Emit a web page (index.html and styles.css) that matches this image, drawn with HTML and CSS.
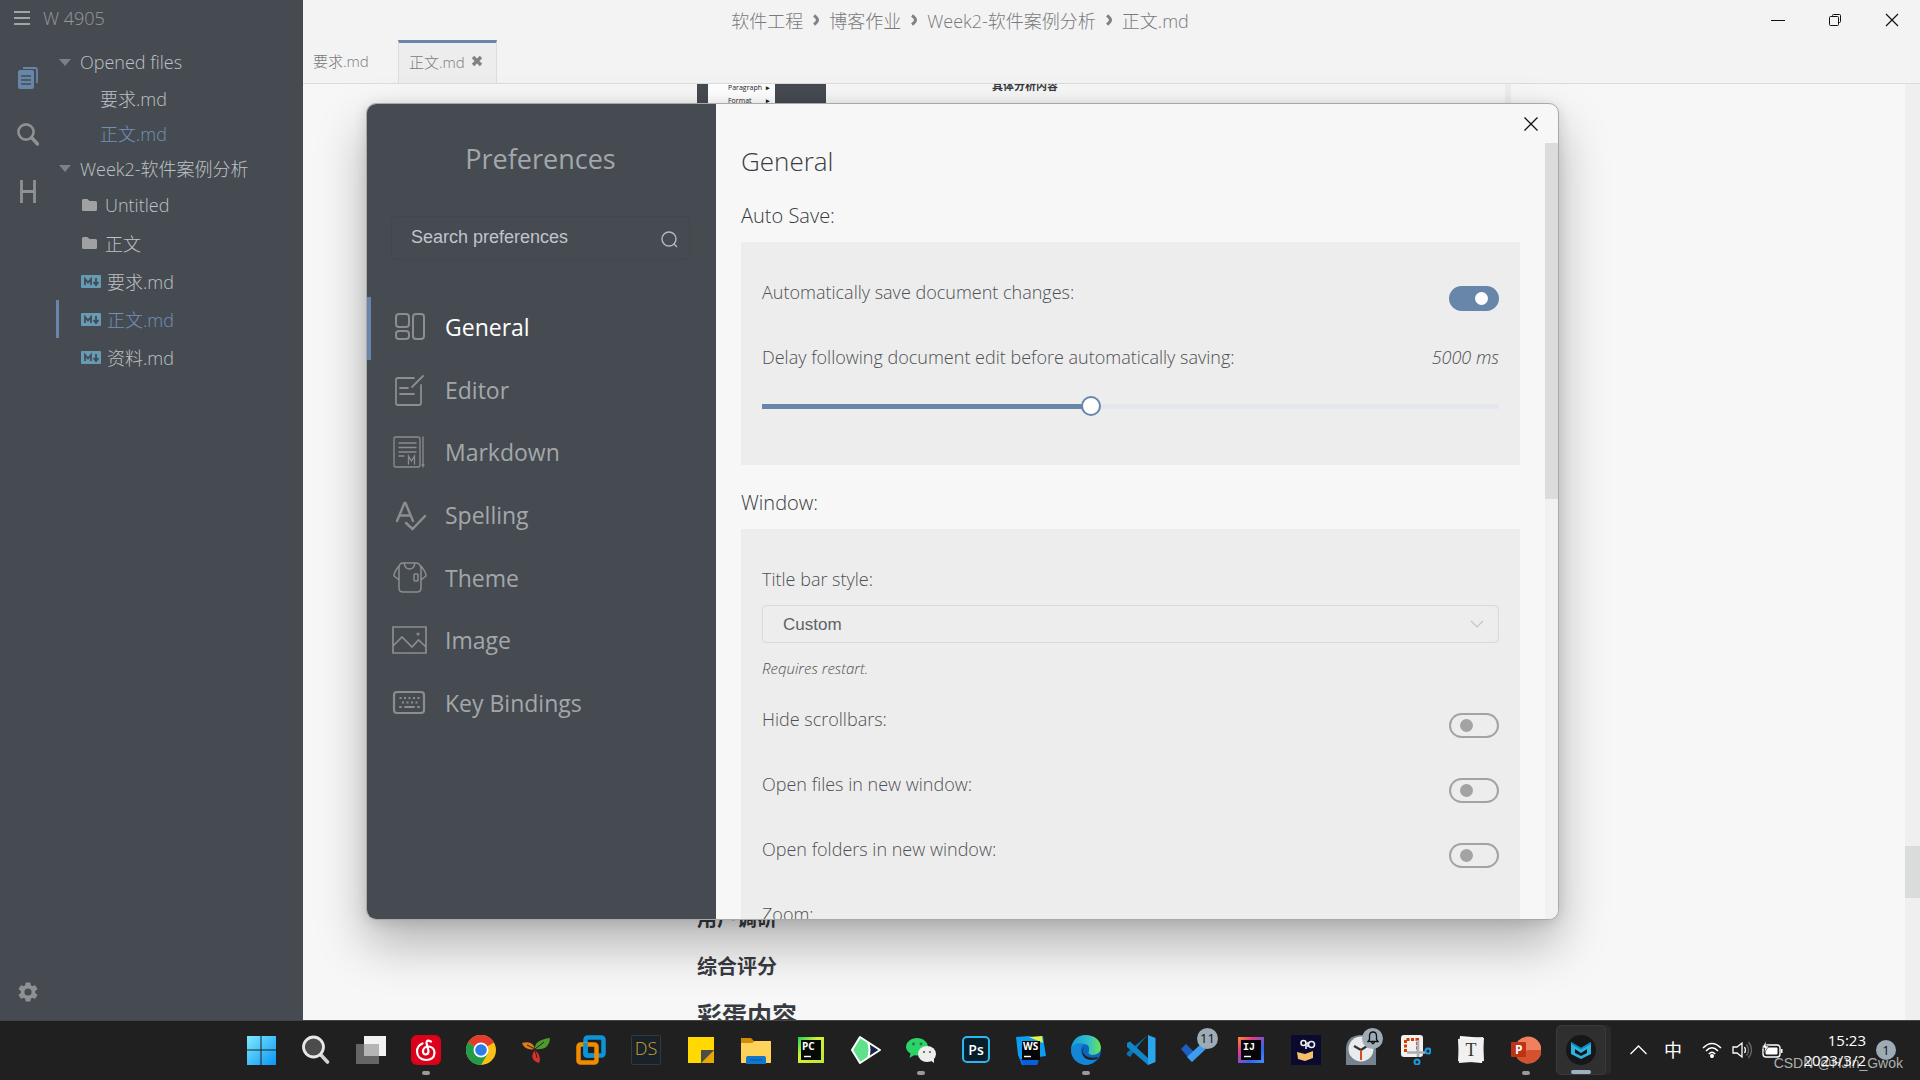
FILE: index.html
```html
<!DOCTYPE html>
<html lang="zh-CN">
<head>
<meta charset="utf-8">
<title>正文.md</title>
<link rel="stylesheet" href="styles.css">
</head>
<body>
<div class="app">
  <aside class="sidebar">
    <header class="side-head">
      <button class="plain" aria-label="Menu"><svg width="16" height="16" viewBox="0 0 16 16" stroke="#c0c3c6" stroke-width="1.6"><path d="M0 2h16M0 8h16M0 14h16"/></svg></button>
      <span class="count">W 4905</span>
    </header>
    <div class="side-body">
      <nav class="rail">
        <button class="plain" aria-label="Files"><svg width="20" height="22" viewBox="0 0 20 22"><path d="M5 1h12q2 0 2 2v13" fill="none" stroke="#6886aa" stroke-width="1.8"/><rect y="3" width="16" height="19" rx="2" fill="#6886aa"/><path d="M3 9h10M3 13h10M3 17h10" stroke="#464b51" stroke-width="1.4"/></svg></button>
        <button class="plain" aria-label="Search"><svg width="22" height="23" viewBox="0 0 22 23" fill="none" stroke="#8f9193"><circle cx="9" cy="9" r="7.6" stroke-width="2.6"/><path d="M14.500 14.500L20.500 21" stroke-width="3.400" stroke-linecap="round"/></svg></button>
        <button class="plain" aria-label="Outline"><svg width="16" height="23" viewBox="0 0 16 23" fill="none" stroke="#8f9193" stroke-width="2.8"><path d="M1.500 0v23M14.500 0v23M1.500 11.500h13"/></svg></button>
        <button class="plain gear" aria-label="Settings"><svg width="24" height="24" viewBox="0 0 24 24" fill="#8f9193"><path d="M19.140 12.940a7 7 0 0 0 0-1.880l2.030-1.580a.5.5 0 0 0 .12-.61l-1.920-3.320a.5.5 0 0 0-.59-.22l-2.390.96a7 7 0 0 0-1.620-.94l-.36-2.540A.5.5 0 0 0 13.920 2.400h-3.840a.5.5 0 0 0-.47.410l-.36 2.540a7 7 0 0 0-1.620.94l-2.390-.96a.5.5 0 0 0-.59.220L2.740 8.870a.5.5 0 0 0 .12.610l2.030 1.580a7 7 0 0 0 0 1.880l-2.030 1.580a.5.5 0 0 0-.12.610l1.920 3.320c.12.220.37.290.59.220l2.390-.96c.5.380 1.030.7 1.620.94l.36 2.540c.05.240.24.410.47.410h3.840c.24 0 .44-.17.470-.41l.36-2.540a7 7 0 0 0 1.620-.94l2.390.96c.22.080.47 0 .59-.22l1.920-3.320a.5.5 0 0 0-.12-.61zM12 15.600a3.600 3.600 0 1 1 0-7.200 3.600 3.600 0 0 1 0 7.200z" fill-rule="evenodd"/></svg></button>
      </nav>
      <div class="tree">
        <div class="row group"><i class="caret"></i>Opened files</div>
        <a class="row opened" href="#">要求.md</a>
        <a class="row opened current" href="#">正文.md</a>
        <div class="row group"><i class="caret"></i>Week2-软件案例分析</div>
        <a class="row item" href="#"><svg class="folder" viewBox="0 0 15 12"><path d="M1.500 0h4l2 2h6q1.500 0 1.500 1.500v7q0 1.500-1.500 1.500h-12Q0 12 0 10.500v-9Q0 0 1.500 0z" fill="#9fa1a3"/></svg>Untitled</a>
        <a class="row item" href="#"><svg class="folder" viewBox="0 0 15 12"><path d="M1.500 0h4l2 2h6q1.500 0 1.500 1.500v7q0 1.500-1.500 1.500h-12Q0 12 0 10.500v-9Q0 0 1.500 0z" fill="#9fa1a3"/></svg>正文</a>
        <a class="row item" href="#"><svg class="md" viewBox="0 0 20 13"><rect width="20" height="13" rx="1" fill="#659bb5"/><path d="M4 10V4l3 3.500L10 4v6M15 3v6M12.500 7l2.500 3 2.500-3" fill="none" stroke="#464b51" stroke-width="1.800"/></svg>要求.md</a>
        <a class="row item current active" href="#"><svg class="md" viewBox="0 0 20 13"><rect width="20" height="13" rx="1" fill="#659bb5"/><path d="M4 10V4l3 3.500L10 4v6M15 3v6M12.500 7l2.500 3 2.500-3" fill="none" stroke="#464b51" stroke-width="1.800"/></svg>正文.md</a>
        <a class="row item" href="#"><svg class="md" viewBox="0 0 20 13"><rect width="20" height="13" rx="1" fill="#659bb5"/><path d="M4 10V4l3 3.500L10 4v6M15 3v6M12.500 7l2.500 3 2.500-3" fill="none" stroke="#464b51" stroke-width="1.800"/></svg>资料.md</a>
      </div>
    </div>
  </aside>

  <main class="editor">
    <header class="titlebar">
      <div class="crumbs"><span>软件工程</span><svg viewBox="0 0 6 12"><path d="M1 1.500q3.500 2.500 3.500 4.500T1 10.500"/></svg><span>博客作业</span><svg viewBox="0 0 6 12"><path d="M1 1.500q3.500 2.500 3.500 4.500T1 10.500"/></svg><span>Week2-软件案例分析</span><svg viewBox="0 0 6 12"><path d="M1 1.500q3.500 2.500 3.500 4.500T1 10.500"/></svg><span>正文.md</span></div>
      <div class="controls">
        <button class="plain" aria-label="Minimize"><svg width="14" height="14" viewBox="0 0 14 14"><path d="M0 7.500h14" stroke="#111"/></svg></button>
        <button class="plain" aria-label="Restore"><svg width="14" height="14" viewBox="0 0 14 14" fill="none" stroke="#111"><rect x="1.500" y="3.500" width="9" height="9" rx="1"/><path d="M4.500 3V2.500q0-1 1-1h6q1 0 1 1v6q0 1-1 1H11"/></svg></button>
        <button class="plain" aria-label="Close"><svg width="14" height="14" viewBox="0 0 14 14"><path d="M1 1l12 12M13 1L1 13" stroke="#111" stroke-width="1.200"/></svg></button>
      </div>
    </header>
    <div class="tabs">
      <a class="tab" href="#">要求.md</a>
      <div class="tab on">正文.md<button class="plain" aria-label="Close tab"><svg width="12" height="12" viewBox="0 0 12 12"><path d="M2 2l8 8M10 2l-8 8" stroke="#808284" stroke-width="3.400"/></svg></button></div>
    </div>
    <div class="scroller">
      <article class="doc">
        <div class="shot">
          <div class="shot-dark edge"></div>
          <div class="shot-menu"><span>Paragraph<b>▸</b></span><span>Format<b>▸</b></span></div>
          <div class="shot-dark"></div>
          <strong class="shot-title">具体分析内容</strong>
        </div>
        <div class="ending">
          <h3>用户调研</h3>
          <h3>综合评分</h3>
          <h2>彩蛋内容</h2>
        </div>
      </article>
      <div class="track"><div class="thumb"></div></div>
    </div>
  </main>
</div>

<section class="prefs" role="dialog" aria-label="Preferences">
  <aside class="prefs-side">
    <h1>Preferences</h1>
    <div class="search">
      <input type="text" placeholder="Search preferences" aria-label="Search preferences">
      <svg width="17" height="17" viewBox="0 0 17 17" fill="none" stroke="#b4b9bf" stroke-width="1.400"><circle cx="8" cy="8" r="7"/><path d="M12.800 12.800l3.200 3.200"/></svg>
    </div>
    <nav class="menu">
      <a class="on" href="#"><svg viewBox="0 0 36 36"><g stroke-width="2"><rect x="5" y="5" width="13" height="13" rx="3"/><rect x="5" y="22" width="13" height="8" rx="3"/><rect x="22" y="5" width="11" height="25" rx="3"/></g></svg>General</a>
      <a href="#"><svg viewBox="0 0 36 36"><path stroke-width="1.800" d="M23 6H7q-2 0-2 2v23q0 2 2 2h21q2 0 2-2V13M21 15L32 4M9 16h8M9 22h14"/></svg>Editor</a>
      <a href="#"><svg viewBox="0 0 36 36"><g stroke-width="1.300"><rect x="3" y="3" width="26" height="30" rx="2"/><path d="M32 3v30M8 9h17M8 13.500h17M8 18h17M8 22h5M17.500 30v-8l3 5 3-5v8M31 31h2"/></g></svg>Markdown</a>
      <a href="#"><svg viewBox="0 0 36 36"><path stroke-width="2.400" d="M6 24l7.500-18h1L22 24M9 18.500h10M15 26l6.500 6L34 19"/></svg>Spelling</a>
      <a href="#"><svg viewBox="0 0 36 36"><g stroke-width="1.500"><path d="M11 3h14q4 0 5 5v20q0 4-4 4H12q-4 0-4-4V8q0-4 3-5zM13 3q1 6 5.500 6T24 3M8 6q-5 6-5 10l5 4M30 6q5 6 5 10l-5 4"/><rect x="23" y="14" width="4" height="7" rx="1"/></g></svg>Theme</a>
      <a href="#"><svg viewBox="0 0 36 36"><path stroke-width="1.700" d="M2 5h33v26H2zM2 24l9-9 10 10 6.500-7 7.500 7"/><circle cx="27" cy="12" r="1" stroke-width="1.200"/></svg>Image</a>
      <a href="#"><svg viewBox="0 0 36 36"><rect x="3" y="7" width="30" height="21" rx="3" stroke-width="2.200"/><path stroke-width="2" stroke-linecap="butt" stroke-dasharray="2 2.500" d="M8.500 13h20M11 17.500h16"/><path stroke-width="2" d="M9 22h1M14 22h9M27 22h1"/></svg>Key Bindings</a>
    </nav>
  </aside>
  <div class="prefs-main">
    <button class="plain close" aria-label="Close preferences"><svg width="14" height="14" viewBox="0 0 14 14"><path d="M.5.5l13 13M13.500.5l-13 13" stroke="#111" stroke-width="1.300"/></svg></button>
    <div class="prefs-scroll">
      <form class="form">
        <h2>General</h2>
        <h3>Auto Save:</h3>
        <div class="card first">
          <div class="line"><label for="autosave">Automatically save document changes:</label><input class="switch" id="autosave" type="checkbox" checked></div>
          <div class="line delay"><label for="delay">Delay following document edit before automatically saving:</label><output for="delay">5000 ms</output></div>
          <input class="slider" id="delay" type="range" min="1000" max="10000" value="5000">
        </div>
        <h3>Window:</h3>
        <div class="card second">
          <label class="cap" for="titlestyle">Title bar style:</label>
          <div class="select"><select id="titlestyle"><option>Custom</option><option>Native</option></select><svg width="14" height="8" viewBox="0 0 14 8"><path d="M1 1l6 6 6-6" fill="none" stroke="#c0c4cc" stroke-width="1.200"/></svg></div>
          <p class="note">Requires restart.</p>
          <div class="line"><label for="hide">Hide scrollbars:</label><input class="switch" id="hide" type="checkbox"></div>
          <div class="line"><label for="files">Open files in new window:</label><input class="switch" id="files" type="checkbox"></div>
          <div class="line"><label for="folders">Open folders in new window:</label><input class="switch" id="folders" type="checkbox"></div>
          <div class="cap">Zoom:</div>
        </div>
      </form>
      <div class="prefs-track"><div class="prefs-thumb"></div></div>
    </div>
  </div>
</section>

<footer class="taskbar">
  <div class="apps">
    <button class="plain task" aria-label="Start"><svg viewBox="0 0 30 30"><defs><linearGradient id="win" x2="1" y2="1"><stop stop-color="#7deaff"/><stop offset="1" stop-color="#0a94f5"/></linearGradient></defs><path fill="url(#win)" d="M1 1h13.500v13.500H1zM15.500 1H30v13.500H15.500zM1 15.500h13.500V30H1zM15.500 15.500H30V30H15.500z"/></svg></button>
    <button class="plain task" aria-label="Search"><svg viewBox="0 0 30 30"><path d="M20 20l6.500 7" stroke="#cdd3d8" stroke-width="3.600" stroke-linecap="round"/><circle cx="12.500" cy="12" r="10" fill="#4c4c4c" stroke="#e6e8ea" stroke-width="2.800"/></svg></button>
    <button class="plain task" aria-label="Task view"><svg viewBox="0 0 30 30"><rect x="8" y="1" width="22" height="20" fill="#f2f2f2"/><rect x="0" y="9" width="23" height="20" fill="#777" opacity=".8"/><path d="M8 9h15v12H8z" fill="#b5b5b5"/></svg></button>
    <button class="plain task run" aria-label="Music"><svg viewBox="0 0 30 30"><rect width="30" height="30" rx="6" fill="#dd001b"/><path d="M20 6.500Q15.500 4 15.500 8l2 8q0 3.500-3 3.500-3-.5-2.500-4 1-4 5.500-4 6 .5 6 6.500-.5 7-8.500 7-8.500-.5-9-8.500Q6 11 11.500 8.500" fill="none" stroke="#fff" stroke-width="2.200" stroke-linecap="round"/></svg></button>
    <button class="plain task" aria-label="Chrome"><svg viewBox="0 0 30 30"><circle cx="15" cy="15" r="15" fill="#fbc116"/><path d="M15 15L2 7.500A15 15 0 0 1 28 7.500z" fill="#e33b2e"/><path d="M15 15L2 7.500A15 15 0 0 0 15 30l6.500-11z" fill="#229a48"/><circle cx="15" cy="15" r="7.500" fill="#fff"/><circle cx="15" cy="15" r="5.800" fill="#2a7de9"/></svg></button>
    <button class="plain task" aria-label="Trilium"><svg viewBox="0 0 30 30"><path d="M14 14Q13 5 29 3q-1 13-15 11z" fill="#4c9b2c"/><path d="M14 14Q4 16 1 8q11-3 13 6z" fill="#e27c16"/><path d="M14 15q-7 9 4 13 3-7-4-13z" fill="#d9332c"/><path d="M14 14l9-7M14 14L6 10M14 15l2 8" stroke="#222"/></svg></button>
    <button class="plain task" aria-label="Virtual machine"><svg viewBox="0 0 30 30" fill="none" stroke-width="4.500"><rect x="9.500" y="2.500" width="18" height="18" rx="2" stroke="#0c94d8"/><rect x="2.500" y="9.500" width="18" height="18" rx="2" stroke="#f18b00"/><path d="M9.500 8v10.500q0 2 2 2H18" stroke="#0c94d8"/></svg></button>
    <button class="plain task" aria-label="DS"><svg viewBox="0 0 30 30"><rect x=".5" y=".5" width="29" height="29" rx="1" fill="#1a2229" stroke="#323940"/><text x="15" y="20" class="t-ds">DS</text></svg></button>
    <button class="plain task" aria-label="Notes"><svg viewBox="0 0 30 30"><path d="M2 2h26v13L15 28H2z" fill="#ffd900"/><path d="M28 15v13H15z" fill="#e9a800"/><path d="M15 15h13L15 28z" fill="#4c4c4c"/></svg></button>
    <button class="plain task" aria-label="Explorer"><svg viewBox="0 0 30 30"><path d="M0 3h10l3 3h17v10H0z" fill="#d18b0b"/><path d="M0 8h11l3-2h16v22H0z" fill="#ffd35a"/><path d="M5 29v-6q0-2 2-2h16q2 0 2 2v6z" fill="#1177cc"/><path d="M9 25h12" stroke="#0a559c"/></svg></button>
    <button class="plain task" aria-label="PyCharm"><svg viewBox="0 0 30 30"><defs><linearGradient id="pc" x2="1" y2="1"><stop stop-color="#17d45b"/><stop offset=".4" stop-color="#d8f030"/><stop offset="1" stop-color="#bfe63a"/></linearGradient></defs><path d="M2 2h26v26H2z" fill="url(#pc)"/><path d="M5 5h20v20H5z" fill="#050a05"/><text x="6" y="15" class="t-ide">PC</text><path d="M8 21.500h7" stroke="#fff" stroke-width="1.400"/></svg></button>
    <button class="plain task" aria-label="Player"><svg viewBox="0 0 30 30"><path d="M9 2L1 15l8 13 20-13z" fill="#5fe08a"/><path d="M17 7l12 8-12 8q3-8 0-16z" fill="#17234f"/><path d="M17 7q3 8 0 16M9 2L1 15l8 13 20-13z" fill="none" stroke="#fff" stroke-width="2" stroke-linejoin="round"/></svg></button>
    <button class="plain task run" aria-label="WeChat"><svg viewBox="0 0 30 30"><path d="M11 3c6 0 11 4 11 9s-5 8.500-11 8.500l-3-.3-4.500 2.800 1-4.500C2 17 0 15 0 12c0-5 5-9 11-9z" fill="#2bd466"/><ellipse cx="21" cy="19" rx="9" ry="8" fill="#ededed"/><path d="M24 25l4 3v-5z" fill="#ededed"/><g fill="#3a6b4a"><circle cx="7.500" cy="9" r="1.400"/><circle cx="15" cy="9" r="1.400"/><circle cx="18" cy="17" r="1.100"/><circle cx="24" cy="17" r="1.100"/></g></svg></button>
    <button class="plain task" aria-label="Photoshop"><svg viewBox="0 0 30 30"><rect x="2" y="2" width="26" height="25" rx="4" fill="#071e2b" stroke="#2db5f2" stroke-width="2"/><text x="15" y="20" class="t-ps">Ps</text></svg></button>
    <button class="plain task" aria-label="WebStorm"><svg viewBox="0 0 30 30"><path d="M0 2l13-1 5 2 9-2 1 8 2 12-7 1-2 8H6L2 20z" fill="#0d9df1"/><path d="M13 2l13-1 1 7z" fill="#e9f04a"/><path d="M4 24l3 6h14l2-6z" fill="#075fe0"/><path d="M6 6h18v19H6z" fill="#050505"/><text x="7" y="15" class="t-ide">WS</text><path d="M8 21.500h7" stroke="#fff" stroke-width="1.400"/></svg></button>
    <button class="plain task run" aria-label="Edge"><svg viewBox="0 0 30 30"><defs><linearGradient id="ed"><stop stop-color="#1599dd"/><stop offset=".6" stop-color="#34c1c4"/><stop offset="1" stop-color="#6be64f"/></linearGradient></defs><circle cx="15" cy="15" r="15" fill="#0b66bd"/><path d="M0 14Q2 0 15 0q14 1 15 13-1 7-9 7-5-1-3-4 1-7-5-7Q3 8 0 14z" fill="url(#ed)"/><path d="M0 14q5-8 13-5-5 4-2 11 4 7 15 4-5 6-12 6Q0 27 0 14z" fill="#1586d6"/><path d="M13 12q-3 5 2 9 5 3 12 1l-1 2q-11 3-14-4-2-5 1-8z" fill="#222"/></svg></button>
    <button class="plain task" aria-label="VS Code"><svg viewBox="0 0 30 30"><path d="M22 0l-7 7.500L4 22l-3.500-2.500 1-2.500L22 0z" fill="#0a73b6"/><path d="M1 8l3-1.500L24 25l-2 5L1 12z" fill="#1187c9"/><path d="M22 0l7.500 3v24L22 30z" fill="#2aa6ee"/></svg></button>
    <button class="plain task" aria-label="To Do"><svg viewBox="0 0 30 30"><path d="M0 14l5-5 10 10-4 8z" fill="#1c5fc0"/><path d="M11 27l-5-5L22 7l6 4z" fill="#3e9cf0"/></svg><span class="badge">11</span></button>
    <button class="plain task" aria-label="IntelliJ"><svg viewBox="0 0 30 30"><defs><linearGradient id="ij" x2="1" y2="1"><stop stop-color="#ff8d24"/><stop offset=".3" stop-color="#e13a8e"/><stop offset=".7" stop-color="#2c67ef"/><stop offset="1" stop-color="#4b8cf8"/></linearGradient></defs><path d="M2 2h26v26H2z" fill="url(#ij)"/><path d="M5 5h20v20H5z" fill="#08050a"/><text x="7" y="15" class="t-ide mono">IJ</text><path d="M8 21.500h7" stroke="#fff" stroke-width="1.400"/></svg></button>
    <button class="plain task" aria-label="Reader"><svg viewBox="0 0 30 30"><path d="M0 0h30v30H0z" fill="#0a0930"/><path d="M6 17l8 2 8-3v7l-8 3-7-2z" fill="#f5c069"/><g fill="none" stroke="#eee" stroke-width="1.600"><circle cx="12.500" cy="8" r="2.500"/><circle cx="20.500" cy="9.500" r="3"/><path d="M15 8v6M17 7v5"/></g></svg></button>
    <button class="plain task" aria-label="Clock"><svg viewBox="0 0 30 30"><path d="M0 30V13Q1 1 14 0h16v30z" fill="#76838e"/><circle cx="15" cy="14" r="12.500" fill="#e9ebed"/><path d="M15 15l-7-4M15 15l6-4" stroke="#333" stroke-width="2.200"/><path d="M15 15v10" stroke="#d84b1c" stroke-width="2"/></svg><span class="badge"><svg class="bell" viewBox="0 0 12 14"><path d="M1 10.500h10l-1.500-2V5q0-4-3.500-4T2.500 5v3.500zM4.500 11q1.500 3.500 3 0" fill="none" stroke="#111" stroke-width="1.300"/></svg></span></button>
    <button class="plain task" aria-label="Snipping"><svg viewBox="0 0 30 30"><rect width="22" height="22" rx="3" fill="#f1f1f1"/><path d="M4.500 17V4.500h12V17" fill="none" stroke="#d83b01" stroke-width="3" stroke-dasharray="3 1.500"/><path d="M17 5v17M6 17.500h18" stroke="#a9b0b6" stroke-width="2.600"/><g fill="none" stroke="#1d9be0" stroke-width="2"><circle cx="27" cy="16" r="2.500"/><circle cx="16" cy="27" r="2.500"/></g></svg></button>
    <button class="plain task" aria-label="Typora"><svg viewBox="0 0 30 30"><path d="M4 1l24 2-2 25-24-2z" fill="#fafafa"/><path d="M2 4l25-2 1 24-25 2z" fill="#f1f1f1"/><text x="15" y="21" class="t-typora">T</text></svg></button>
    <button class="plain task run" aria-label="PowerPoint"><svg viewBox="0 0 30 30"><circle cx="17" cy="15" r="13.500" fill="#f08060"/><path d="M17 15h13.500A13.500 13.500 0 0 1 5 21z" fill="#d35230"/><rect x="0" y="7" width="15" height="15" rx="1" fill="#bd3314"/><text x="4" y="19" class="t-ppt">P</text></svg></button>
    <button class="plain task front" aria-label="MarkText"><svg viewBox="0 0 30 30"><circle cx="15" cy="15" r="15" fill="#161718"/><path d="M5 7l10 6 10-6v12l-10 5-10-5z" fill="#2cb4e0"/><path d="M9 14l6 4 6-4v4l-6 3-6-3z" fill="#161718"/><path d="M5 8l10 6 10-6" fill="none" stroke="#1587b4" stroke-width="1.500"/></svg></button>
  </div>
  <div class="tray">
    <svg width="17" height="10" viewBox="0 0 17 10"><path d="M.5 9l8-8 8 8" fill="none" stroke="#fff" stroke-width="1.300"/></svg>
    <span class="ime">中</span>
    <svg width="20" height="16" viewBox="0 0 20 16" fill="none" stroke="#fff" stroke-width="1.500"><path d="M1 6q9-9 18 0M4 9q6-6.500 12 0M6.800 12q3.200-3.500 6.400 0"/><circle cx="10" cy="14" r="1.300" fill="#fff"/></svg>
    <svg width="20" height="18" viewBox="0 0 20 18" fill="none" stroke="#fff" stroke-width="1.300"><path d="M1 6h4l5-4v14l-5-4H1zM12.500 6q2 3 0 6"/><path d="M14.500 3.500q4 5.500 0 11M16.500 1q6 8 0 16" stroke="#666"/></svg>
    <svg width="21" height="17" viewBox="0 0 21 17"><rect x="1" y="4" width="17" height="12" rx="3" fill="none" stroke="#fff" stroke-width="1.400"/><rect x="3.500" y="6.500" width="12" height="7" rx="1" fill="#fff"/><path d="M19 8h1.500v4H19z" fill="#fff"/><path d="M4 0L0 7h3l-1 5 5-7H4z" fill="#fff" stroke="#202020" stroke-width=".6"/></svg>
    <div class="clock"><time>15:23</time><time>2023/3/2</time></div>
    <span class="notif">1</span>
  </div>
  <span class="watermark">CSDN @HJin_Gwok</span>
</footer>
</body>
</html>
```
FILE: styles.css
```css
* { box-sizing: border-box; }

body {
  margin: 0;
  height: 100vh;
  display: flex;
  flex-direction: column;
  overflow: hidden;
  position: relative;
  font-family: "Open Sans", "Noto Sans CJK SC", sans-serif;
  font-weight: 300;
  font-size: 18px;
  color: #383b3f;
}

h1, h2, h3, p { margin: 0; }
a { color: inherit; text-decoration: none; }
svg { display: block; flex: none; }

.plain {
  border: 0;
  padding: 0;
  background: none;
  font: inherit;
  display: flex;
  align-items: center;
  justify-content: center;
}

.app { flex: 1; min-height: 0; display: flex; }

/* file sidebar */
.sidebar {
  width: 303px;
  flex: none;
  background: #464b51;
  color: #bdc1c5;
  display: flex;
  flex-direction: column;
}
.side-head { display: flex; align-items: center; gap: 13px; height: 36px; padding-left: 14px; }
.count { color: #96999c; }
.side-body { flex: 1; display: flex; }
.rail {
  width: 56px;
  display: flex;
  flex-direction: column;
  align-items: center;
  padding: 31px 0 16px;
  gap: 34px;
}
.gear { margin-top: auto; }
.tree { flex: 1; padding-top: 8px; }
.row { display: flex; align-items: center; height: 36px; }
.row.group { gap: 9px; padding-left: 3px; }
.caret { border: 6px solid transparent; border-top: 7px solid #7c8187; border-bottom: 0; }
.row.opened { height: 35px; padding-left: 44px; }
.row.item { height: 38px; padding-left: 22px; border-left: 3px solid transparent; }
.row.active { border-left-color: #6886aa; }
.current { color: #6f91ba; }
.folder { width: 15px; height: 12px; margin: 0 8px 0 1px; }
.md { width: 20px; height: 13px; margin-right: 6px; }

/* editor */
.editor { flex: 1; min-width: 0; display: flex; flex-direction: column; background: #f7f7f7; }
.titlebar { height: 40px; display: flex; align-items: center; background: #f3f3f3; }
.crumbs { flex: 1; display: flex; align-items: center; justify-content: center; gap: 10px; color: #777a7d; padding-right: 132px; }
.crumbs svg { width: 6px; height: 12px; fill: none; stroke: #808284; stroke-width: 3; }
.controls { display: flex; }
.controls .plain { width: 57px; height: 40px; }
.tabs { display: flex; height: 44px; background: #f3f3f3; border-bottom: 1px solid #dcdcdc; }
.tab { width: 95px; padding: 0 0 2px 10px; display: flex; align-items: center; gap: 6px; font-size: 15px; color: #777a7d; }
.tab.on { width: 99px; padding-bottom: 4px; background: #ededed; border: 1px solid #dcdcdc; border-top: 3px solid #6886aa; border-bottom: 0; }
.scroller { flex: 1; min-height: 0; display: flex; overflow: hidden; }
.doc { flex: 1; display: flex; flex-direction: column; justify-content: space-between; align-items: center; }
.shot, .ending { width: 814px; }
.shot { height: 60px; display: flex; border-right: 6px solid #eeeeee; }
.shot-dark { width: 51px; flex: none; background: #464b51; }
.shot-dark.edge { width: 11px; }
.shot-menu { width: 67px; flex: none; background: #fff; font-size: 7px; line-height: 13px; color: #222; padding: 0 5px 0 20px; margin-top: -3px; font-weight: 400; }
.shot-menu span { display: flex; justify-content: space-between; }
.shot-title { font-size: 11px; line-height: 13px; font-weight: 700; margin: -5px 0 0 166px; }
.ending { height: 125px; flex: none; }
.ending h3 { font-size: 20px; line-height: 48px; font-weight: 700; }
.ending h2 { font-size: 25px; line-height: 48px; font-weight: 700; }
.track { width: 15px; background: #efefef; display: flex; align-items: flex-end; }
.thumb { width: 15px; height: 52px; margin-bottom: 122px; background: #dadcdc; }

/* preferences window, floating over the editor */
.prefs {
  position: absolute;
  left: 366px;
  right: 361px;
  top: 103px;
  bottom: 160px;
  display: flex;
  overflow: hidden;
  border: 1px solid #a9a9a9;
  border-radius: 10px;
  background: #f7f7f7;
  box-shadow: 0 24px 50px rgba(0, 0, 0, .28), 0 2px 14px rgba(0, 0, 0, .12);
}
.prefs-side { width: 349px; flex: none; background: #464b51; color: #a3a7ab; padding: 31px 26px 0 24px; }
.prefs-side h1 { font-size: 27px; line-height: 48px; font-weight: 400; text-align: center; }
.search {
  height: 44px;
  margin: 33px 0 37px;
  padding: 0 11px 0 19px;
  display: flex;
  align-items: center;
  border: 1px solid #42474c;
  border-radius: 4px;
}
.search input {
  flex: 1;
  min-width: 0;
  border: 0;
  padding: 0 0 2px;
  background: none;
  font: 400 18px "Liberation Sans", sans-serif;
}
.search input::placeholder { color: #c0c4cc; }
.search svg { margin-top: 3px; }
.menu { height: 438px; margin-left: -24px; display: grid; grid-auto-rows: 1fr; font-size: 23px; font-weight: 400; }
.menu a { display: flex; align-items: center; gap: 18px; padding: 0 0 2px 20px; border-left: 4px solid transparent; }
.menu a.on { color: #fff; border-left-color: #6886aa; }
.menu svg { width: 36px; height: 36px; fill: none; stroke: #8b8e90; stroke-linecap: round; }

.prefs-main { flex: 1; min-width: 0; display: flex; flex-direction: column; }
.close { height: 39px; width: 54px; align-self: flex-end; flex: none; }
.prefs-scroll { flex: 1; min-height: 0; display: flex; }
.form { flex: 1; padding: 0 25px; overflow: hidden; }
.form h2 { font-size: 26px; line-height: 36px; font-weight: 300; }
.form h3 { font-size: 20px; line-height: 26px; font-weight: 300; }
.form h2 + h3 { margin: 24px 0 13px; }
.card + h3 { margin: 25px 0 13px; }
.card { background: #ededed; padding: 37px 21px 0; color: #4d5054; }
.card.first { height: 223px; }
.card.second { height: 600px; }
.line { height: 26px; display: flex; justify-content: space-between; line-height: 26px; margin-bottom: 39px; }
.line.delay { margin-bottom: 26px; }
.line output { font-style: italic; }
.cap { display: block; line-height: 26px; }
.note { font-size: 15px; line-height: 20px; font-style: italic; margin: 15px 0 28px; }

.switch {
  appearance: none;
  width: 50px;
  height: 25px;
  margin: 7px 0 0;
  padding: 0 9px;
  flex: none;
  display: flex;
  align-items: center;
  border: 2px solid #a3a3a3;
  border-radius: 13px;
}
.switch::before { content: ""; width: 13px; height: 13px; border-radius: 50%; background: #a3a3a3; }
.switch:checked { justify-content: flex-end; background: #6886aa; border-color: #6886aa; }
.switch:checked::before { background: #fff; }

.slider {
  appearance: none;
  display: block;
  width: 100%;
  height: 20px;
  margin: 0;
  background: linear-gradient(90deg, #6886aa 44%, #e4e7ed 44%) center / 100% 5px no-repeat;
}
.slider::-webkit-slider-thumb {
  appearance: none;
  width: 20px;
  height: 20px;
  border-radius: 50%;
  border: 2px solid #6886aa;
  background: #fff;
}

.select { display: flex; align-items: center; height: 38px; margin-top: 13px; padding-right: 14px; border: 1px solid #d9d9d9; border-radius: 4px; }
.select select {
  appearance: none;
  flex: 1;
  height: 100%;
  border: 0;
  padding: 0 20px;
  background: none;
  color: #606266;
  font: 400 17px "Liberation Sans", sans-serif;
}
.prefs-track { width: 13px; background: #f1f1f1; }
.prefs-thumb { height: 356px; background: #dadddc; }

/* taskbar */
.taskbar {
  position: relative;
  height: 60px;
  flex: none;
  display: flex;
  align-items: center;
  justify-content: space-between;
  padding: 0 23px 2px 233px;
  background: #202020;
  border-top: 1px solid #444;
  color: #fff;
  font-weight: 400;
}
.apps { display: flex; }
.task { position: relative; width: 55px; height: 50px; }
.task > svg { width: 30px; height: 30px; }
.run::after, .front::after { content: ""; position: absolute; bottom: 0; width: 8px; height: 4px; border-radius: 2px; background: #999; }
.front { width: 44px; margin-left: 3px; background: #2f2f2f; border: 1px solid #3a3a3a; border-radius: 5px; box-shadow: 5px 0 0 #2a2a2a; width: 50px; }
.front::after { width: 20px; background: #9fb0be; }
.badge {
  position: absolute;
  top: 3px;
  right: 5px;
  width: 21px;
  height: 21px;
  border-radius: 50%;
  background: #9dabb6;
  color: #111;
  font-size: 13px;
  line-height: 21px;
  text-align: center;
}
.bell { width: 12px; height: 14px; margin: 3px auto; }
.t-ds { font: 300 18px "Open Sans", sans-serif; fill: #d0a332; text-anchor: middle; }
.t-ide { font: 700 10px "Open Sans", sans-serif; fill: #fff; }
.t-ide.mono { font-family: "Liberation Mono", monospace; }
.t-ps { font: 600 14px "Open Sans", sans-serif; fill: #fff; text-anchor: middle; }
.t-typora { font: 400 18px "Liberation Serif", serif; fill: #333; text-anchor: middle; }
.t-ppt { font: 700 12px "Open Sans", sans-serif; fill: #fff; }
.tray { display: flex; align-items: center; gap: 10px; }
.ime { font-size: 18px; line-height: 20px; margin: 0 10px 0 7px; }
.clock { display: flex; flex-direction: column; align-items: flex-end; font-size: 15px; line-height: 20px; width: 73px; }
.notif { width: 20px; height: 20px; border-radius: 50%; background: #9dabb6; color: #111; font-size: 13px; line-height: 20px; text-align: center; margin-right: 1px; }
.watermark {
  position: absolute;
  right: 17px;
  bottom: 8px;
  font: 400 14px/18px "Liberation Sans", sans-serif;
  color: rgba(255, 255, 255, .65);
}
```
